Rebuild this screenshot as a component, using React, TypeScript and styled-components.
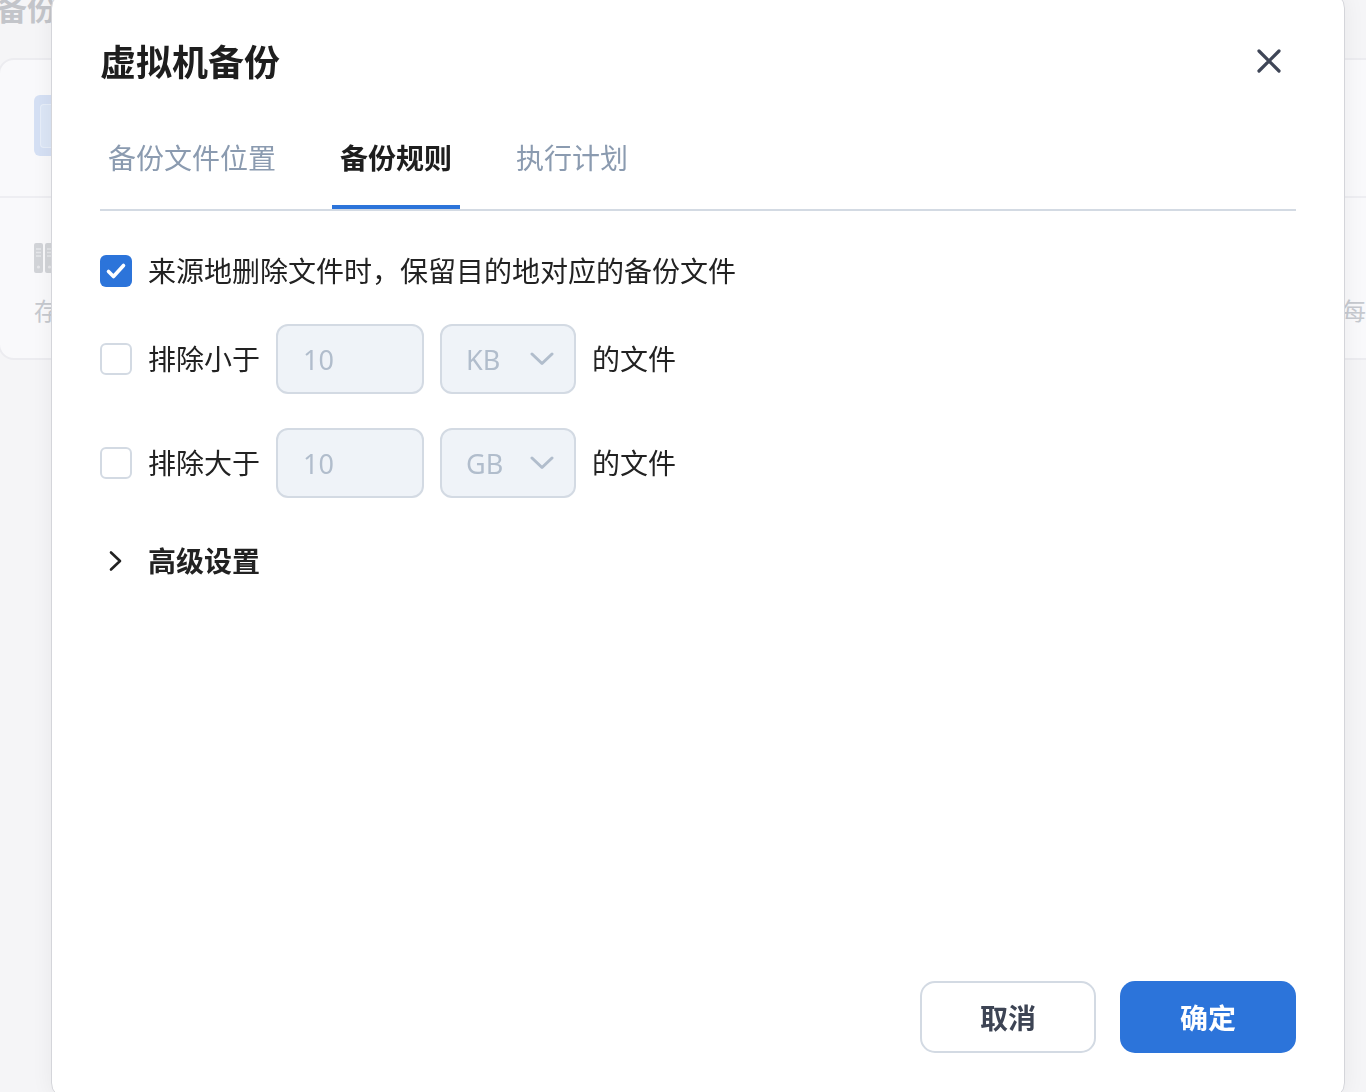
import React, { useState } from "react";
import styled, { createGlobalStyle } from "styled-components";

const GlobalStyle = createGlobalStyle`
  html, body { margin: 0; padding: 0; }
  body {
    font-family: "Noto Sans", "Noto Sans CJK SC", sans-serif;
    background: #f5f5f7;
    overflow: hidden;
  }
  * { box-sizing: border-box; }
`;

/* ---------- page behind the dialog ---------- */

const Page = styled.div`
  width: 1366px;
  height: 1092px;
  overflow: hidden;
  background: #f5f5f7;
  display: flex;
  flex-direction: column;
`;

const PageTitle = styled.div`
  margin: -9px 0 0 -3px;
  font-size: 30px;
  line-height: 36px;
  font-weight: 700;
  color: #c3c5ca;
  white-space: nowrap;
`;

const Card = styled.div`
  margin: 31px -40px 0 -2px;
  border: 2px solid #ececf0;
  border-radius: 16px;
  background: #f9f9fb;
  display: flex;
  flex-direction: column;
`;

const CardSection = styled.div<{ $h: number; $divider?: boolean }>`
  height: ${(p) => p.$h}px;
  border-bottom: ${(p) => (p.$divider ? "2px solid #eeeef2" : "none")};
  display: grid;
  grid-template-columns: 1308px 1fr;
  padding-left: 34px;
`;

const Col = styled.div<{ $pt: number }>`
  display: flex;
  flex-direction: column;
  gap: 24px;
  padding-top: ${(p) => p.$pt}px;
`;

const BlueTile = styled.div`
  width: 64px;
  height: 61px;
  border-radius: 6px;
  background: #d5e0f4;
  padding: 9px 0 0 6px;
`;

const BlueInner = styled.div`
  width: 100%;
  height: 44px;
  border-radius: 4px 0 0 4px;
  border: 1.5px solid #e7eef9;
  border-right: none;
  background: #dce6f6;
`;

const FaintText = styled.div`
  font-size: 24px;
  line-height: 28px;
  color: #c6c9cf;
  white-space: nowrap;
`;

/* ---------- dialog ---------- */

const Overlay = styled.div`
  position: fixed;
  inset: 0;
`;

const Dialog = styled.div`
  position: absolute;
  left: 51px;
  top: -8px;
  width: 1294px;
  height: 1107px;
  background: #ffffff;
  border: 1px solid #d4d5da;
  border-radius: 16px;
  box-shadow: 0 0 22px rgba(0, 0, 0, 0.06);
  padding: 47px 48px 45px;
  display: flex;
  flex-direction: column;
`;

const Header = styled.div`
  display: flex;
  align-items: center;
  justify-content: space-between;
`;

const Title = styled.h1`
  margin: 0;
  font-size: 36px;
  line-height: 46px;
  font-weight: 700;
  color: #1e1e1e;
`;

const CloseButton = styled.button`
  width: 32px;
  height: 32px;
  margin: -4px 11px 0 0;
  padding: 0;
  border: none;
  background: transparent;
  display: flex;
  align-items: center;
  justify-content: center;
  cursor: pointer;
`;

const TabBar = styled.div`
  margin-top: 52px;
  display: flex;
  gap: 48px;
  border-bottom: 2px solid #d3dae3;
`;

const Tab = styled.div<{ $active?: boolean }>`
  position: relative;
  padding: 0 8px 31px;
  font-size: 28px;
  line-height: 40px;
  font-weight: ${(p) => (p.$active ? 700 : 400)};
  color: ${(p) => (p.$active ? "#1e1e1e" : "#8b9bb0")};
  cursor: pointer;
  &::after {
    content: "";
    position: absolute;
    left: 0;
    right: 0;
    bottom: 0;
    height: 4px;
    background: ${(p) => (p.$active ? "#2c74da" : "transparent")};
  }
`;

const Body = styled.div`
  margin-top: 41px;
  display: flex;
  flex-direction: column;
  gap: 34px;
`;

const Row = styled.div<{ $h: number }>`
  height: ${(p) => p.$h}px;
  display: flex;
  align-items: center;
  gap: 16px;
`;

const Text = styled.span<{ $bold?: boolean }>`
  font-size: 28px;
  line-height: 40px;
  font-weight: ${(p) => (p.$bold ? 700 : 400)};
  color: #222222;
  white-space: nowrap;
`;

const CheckBox = styled.div<{ $checked?: boolean }>`
  width: 32px;
  height: 32px;
  flex: none;
  border-radius: 6px;
  background: ${(p) => (p.$checked ? "#2c74da" : "#ffffff")};
  border: ${(p) => (p.$checked ? "none" : "2px solid #d3dae3")};
  display: flex;
  align-items: center;
  justify-content: center;
  cursor: pointer;
`;

const NumberBox = styled.div`
  width: 148px;
  height: 70px;
  flex: none;
  border: 2px solid #d3dae3;
  border-radius: 12px;
  background: #eff3f8;
  padding-left: 25px;
  display: flex;
  align-items: center;
  font-size: 27px;
  color: #b1bdcc;
`;

const SelectBox = styled.div`
  width: 136px;
  height: 70px;
  flex: none;
  border: 2px solid #d3dae3;
  border-radius: 12px;
  background: #eff3f8;
  padding: 0 20px 0 24px;
  display: flex;
  align-items: center;
  justify-content: space-between;
  font-size: 27px;
  color: #b1bdcc;
`;

const ChevronSlot = styled.div`
  width: 32px;
  display: flex;
  justify-content: center;
`;

const Advanced = styled(Row)`
  margin-top: 9px;
  cursor: pointer;
`;

const Footer = styled.div`
  margin-top: auto;
  display: flex;
  justify-content: flex-end;
  gap: 24px;
`;

const Button = styled.button<{ $primary?: boolean }>`
  width: 176px;
  height: 72px;
  border-radius: 15px;
  font-family: inherit;
  font-size: 28px;
  font-weight: 700;
  cursor: pointer;
  border: ${(p) => (p.$primary ? "none" : "2px solid #d3dae3")};
  background: ${(p) => (p.$primary ? "#2c74da" : "#ffffff")};
  color: ${(p) => (p.$primary ? "#ffffff" : "#3d4454")};
`;

const CheckMark = () => (
  <svg width="32" height="32" viewBox="0 0 32 32">
    <path d="M8.5 16.5 L13.5 21.5 L23.5 10.5" fill="none" stroke="#fff" strokeWidth="3.6" strokeLinecap="round" strokeLinejoin="round" />
  </svg>
);

const ChevronDown = () => (
  <svg width="24" height="14" viewBox="0 0 24 14">
    <path d="M2 2 L12 11.5 L22 2" fill="none" stroke="#b1bdcc" strokeWidth="3" strokeLinecap="round" strokeLinejoin="round" />
  </svg>
);

const ChevronRight = () => (
  <svg width="16" height="22" viewBox="0 0 16 22">
    <path d="M3 2.5 L12 11 L3 19.5" fill="none" stroke="#222" strokeWidth="2.6" strokeLinecap="round" strokeLinejoin="round" />
  </svg>
);

const CloseIcon = () => (
  <svg width="24" height="24" viewBox="0 0 24 24">
    <path d="M2 2 L22 22 M22 2 L2 22" fill="none" stroke="#3f4657" strokeWidth="3.2" strokeLinecap="round" />
  </svg>
);

const ServerIcon = () => (
  <svg width="20" height="30" viewBox="0 0 20 30">
    <rect x="0" y="0" width="9" height="30" rx="2" fill="#d2d4d8" />
    <rect x="11" y="0" width="9" height="30" rx="2" fill="#d2d4d8" />
    <path d="M2 6 H7 M2 9.5 H7 M2 13 H7 M13 6 H18 M13 9.5 H18 M13 13 H18" stroke="#e6e7ea" strokeWidth="1.4" />
    <circle cx="4.5" cy="24" r="1.6" fill="#e6e7ea" />
    <circle cx="15.5" cy="24" r="1.6" fill="#e6e7ea" />
  </svg>
);

const SizeRow = ({ label, unit, checked, onToggle }: { label: string; unit: string; checked: boolean; onToggle: () => void }) => (
  <Row $h={70}>
    <CheckBox $checked={checked} onClick={onToggle}>
      {checked && <CheckMark />}
    </CheckBox>
    <Text>{label}</Text>
    <NumberBox>10</NumberBox>
    <SelectBox>
      <span>{unit}</span>
      <ChevronDown />
    </SelectBox>
    <Text>的文件</Text>
  </Row>
);

export default function App() {
  const [keep, setKeep] = useState(true);
  const [small, setSmall] = useState(false);
  const [large, setLarge] = useState(false);
  const tabs = ["备份文件位置", "备份规则", "执行计划"];
  const [active, setActive] = useState(1);

  return (
    <>
      <GlobalStyle />
      <Page>
        <PageTitle>备份任务</PageTitle>
        <Card>
          <CardSection $h={138} $divider>
            <Col $pt={35}>
              <BlueTile>
                <BlueInner />
              </BlueTile>
            </Col>
            <div />
          </CardSection>
          <CardSection $h={160}>
            <Col $pt={45}>
              <ServerIcon />
              <FaintText>存储位置</FaintText>
            </Col>
            <Col $pt={99}>
              <FaintText>每天</FaintText>
            </Col>
          </CardSection>
        </Card>
      </Page>

      <Overlay>
        <Dialog>
          <Header>
            <Title>虚拟机备份</Title>
            <CloseButton aria-label="关闭">
              <CloseIcon />
            </CloseButton>
          </Header>

          <TabBar>
            {tabs.map((t, i) => (
              <Tab key={t} $active={i === active} onClick={() => setActive(i)}>
                {t}
              </Tab>
            ))}
          </TabBar>

          <Body>
            <Row $h={38}>
              <CheckBox $checked={keep} onClick={() => setKeep(!keep)}>
                {keep && <CheckMark />}
              </CheckBox>
              <Text>来源地删除文件时，保留目的地对应的备份文件</Text>
            </Row>
            <SizeRow label="排除小于" unit="KB" checked={small} onToggle={() => setSmall(!small)} />
            <SizeRow label="排除大于" unit="GB" checked={large} onToggle={() => setLarge(!large)} />
            <Advanced $h={40}>
              <ChevronSlot>
                <ChevronRight />
              </ChevronSlot>
              <Text $bold>高级设置</Text>
            </Advanced>
          </Body>

          <Footer>
            <Button>取消</Button>
            <Button $primary>确定</Button>
          </Footer>
        </Dialog>
      </Overlay>
    </>
  );
}
